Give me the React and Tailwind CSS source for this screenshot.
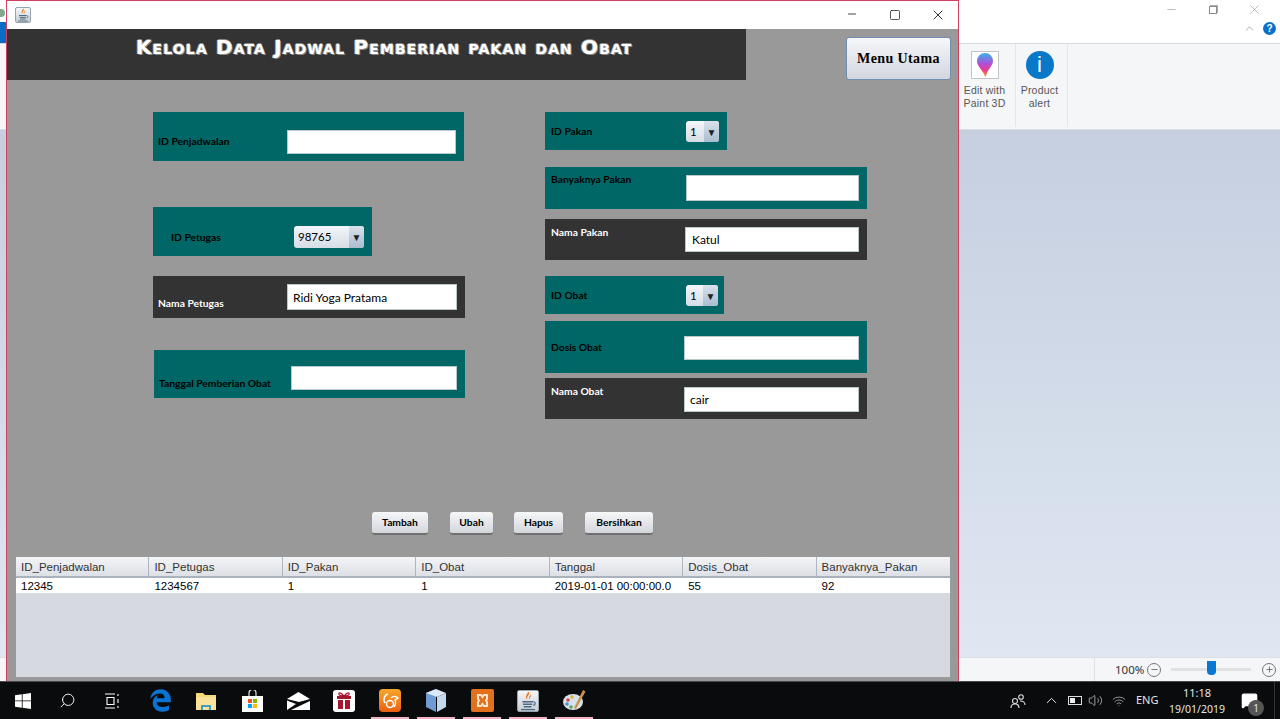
import { Minus, Plus, Search, Square, Volume2, X, ChevronUp, Wifi, MessageSquare } from "lucide-react";
import { FaEdgeLegacy } from "react-icons/fa6";

const labelFont = "font-['Lato',sans-serif] text-[10.3px] font-bold leading-[14px]";

function Field({ className, labelClass, label, children }) {
  return (
    <div className={`flex items-start ${className}`}>
      <span className={`whitespace-nowrap ${labelFont} ${labelClass}`}>{label}</span>
      {children}
    </div>
  );
}

function TextBox({ className, value }) {
  return (
    <div
      className={`flex items-center border border-[#b9c9c9] bg-white pl-[5px] pt-px font-['Lato',sans-serif] text-[12px] text-black ${className}`}
    >
      {value}
    </div>
  );
}

function Combo({ className, value }) {
  return (
    <div
      className={`flex items-center overflow-hidden rounded-[3px] bg-gradient-to-b from-[#f4f6f9] to-[#d5dde6] font-['Lato',sans-serif] text-[11.5px] text-black ${className}`}
    >
      <span className="flex-1 pl-[4px]">{value}</span>
      <span className="flex h-full w-[15px] items-center justify-center bg-gradient-to-b from-[#d9e2ec] to-[#a9bdd1] text-[10px] leading-none text-[#222]">
        ▼
      </span>
    </div>
  );
}

function ActionButton({ className, children }) {
  return (
    <button
      className={`h-[23px] rounded-[3px] border-b-2 border-b-[#6e6e6e] bg-gradient-to-b from-[#f6f7f9] to-[#d3d6dc] font-['Lato',sans-serif] text-[10.3px] font-bold text-black ${className}`}
    >
      {children}
    </button>
  );
}

function JavaIcon({ size = 16 }) {
  return (
    <div
      className="flex items-center justify-center rounded-[2px] border border-[#98a3ad] bg-gradient-to-b from-[#f5f6f7] to-[#c9ced4]"
      style={{ width: size, height: size }}
    >
      <svg width={size - 2} height={size - 2} viewBox="0 0 14 14" fill="none">
        <path d="M7.500 0.500C9 2.500 5.500 3.500 6.500 6 5 4.500 5.500 2.500 7.500 0.500z" fill="#e8761f" />
        <path d="M9 2.500C9.500 4 8 4.500 8 6 7.300 4.800 8 3.500 9 2.500z" fill="#e8761f" />
        <path d="M3 7.500h7.500M3.500 9.300h6.500M4 11h5.500" stroke="#4d6b85" strokeWidth="1" />
        <path d="M10.500 7.500c2 0 2 2.500 0 2.500" stroke="#4d6b85" strokeWidth="0.800" />
        <path d="M2 13h10" stroke="#4d6b85" strokeWidth="0.900" />
      </svg>
    </div>
  );
}

const columns = ["ID_Penjadwalan", "ID_Petugas", "ID_Pakan", "ID_Obat", "Tanggal", "Dosis_Obat", "Banyaknya_Pakan"];
const row = ["12345", "1234567", "1", "1", "2019-01-01 00:00:00.0", "55", "92"];

function JavaWindow() {
  return (
    <div className="absolute left-[6px] top-0 flex h-[681px] w-[953px] flex-col border-x border-t border-[#d3405f] bg-[#999999]">
      <div className="flex h-[28px] shrink-0 items-center bg-white">
        <div className="ml-[8px]">
          <JavaIcon />
        </div>
        <div className="ml-auto flex items-center text-[#111]">
          <div className="-mt-[2px] flex w-[43px] justify-center">
            <Minus size={12} strokeWidth={1.600} />
          </div>
          <div className="flex w-[43px] justify-center">
            <Square size={12} strokeWidth={1.400} />
          </div>
          <div className="mr-[-1px] flex w-[43px] justify-center">
            <X size={16} strokeWidth={1.300} />
          </div>
        </div>
      </div>

      <div className="flex h-[51px] shrink-0 items-start">
        <div className="flex h-[51px] w-[739px] bg-[#333333] pl-[129px] pt-[6px]">
          <h1 className="whitespace-nowrap font-['DejaVu_Sans',sans-serif] text-[20px] font-bold leading-[24px] tracking-[1.12px] text-white [font-variant:small-caps] [text-shadow:1px_1px_0_#8a8a8a,-1px_0_0_#aaa,0_-1px_0_#888]">
            Kelola Data Jadwal Pemberian pakan dan Obat
          </h1>
        </div>
        <button className="ml-[100px] mt-[8px] h-[43px] w-[105px] rounded-[3px] border border-[#6f90b3] bg-gradient-to-b from-[#f6f7fa] to-[#d2d6de] font-['Liberation_Serif',serif] text-[14px] font-bold tracking-[0.4px] text-black">
          Menu Utama
        </button>
      </div>

      <div className="flex h-[339px] shrink-0 pl-[146px] pt-[32px]">
        <div className="w-[392px]">
          <Field className="h-[49px] w-[311px] bg-[#006666] pl-[5px] pt-[22px]" labelClass="w-[129px] text-black" label="ID Penjadwalan">
            <TextBox className="-mt-[4px] h-[24px] w-[169px]" />
          </Field>
          <Field className="mt-[46px] h-[49px] w-[219px] bg-[#006666] pl-[18px] pt-[23px]" labelClass="w-[123px] text-black" label="ID Petugas">
            <Combo className="-mt-[4px] h-[22px] w-[70px]" value="98765" />
          </Field>
          <Field className="mt-[20px] h-[42px] w-[312px] bg-[#333333] pl-[5px] pt-[20px]" labelClass="w-[129px] text-white" label="Nama Petugas">
            <TextBox className="-mt-[12px] h-[26px] w-[170px]" value="Ridi Yoga Pratama" />
          </Field>
          <Field className="ml-[1px] mt-[32px] h-[48px] w-[311px] bg-[#006666] pl-[5px] pt-[26px]" labelClass="w-[132px] text-black" label="Tanggal Pemberian Obat">
            <TextBox className="-mt-[10px] h-[24px] w-[166px]" />
          </Field>
        </div>
        <div>
          <Field className="h-[38px] w-[182px] bg-[#006666] pl-[6px] pt-[12px]" labelClass="w-[135px] text-black" label="ID Pakan">
            <Combo className="-mt-[3px] h-[21px] w-[33px]" value="1" />
          </Field>
          <Field className="mt-[17px] h-[42px] w-[322px] bg-[#006666] pl-[6px] pt-[5px]" labelClass="w-[135px] text-black" label="Banyaknya Pakan">
            <TextBox className="mt-[3px] h-[26px] w-[173px]" />
          </Field>
          <Field className="mt-[10px] h-[41px] w-[322px] bg-[#333333] pl-[6px] pt-[6px]" labelClass="w-[134px] text-white" label="Nama Pakan">
            <TextBox className="mt-[2px] h-[25px] w-[174px] pl-[6px]" value="Katul" />
          </Field>
          <Field className="mt-[16px] h-[38px] w-[179px] bg-[#006666] pl-[6px] pt-[12px]" labelClass="w-[135px] text-black" label="ID Obat">
            <Combo className="-mt-[3px] h-[21px] w-[32px]" value="1" />
          </Field>
          <Field className="mt-[7px] h-[52px] w-[322px] bg-[#006666] pl-[6px] pt-[19px]" labelClass="w-[133px] text-black" label="Dosis Obat">
            <TextBox className="-mt-[4px] h-[24px] w-[175px]" />
          </Field>
          <Field className="mt-[5px] h-[41px] w-[322px] bg-[#333333] pl-[6px] pt-[6px]" labelClass="w-[133px] text-white" label="Nama Obat">
            <TextBox className="mt-[3px] h-[25px] w-[175px]" value="cair" />
          </Field>
        </div>
      </div>

      <div className="mt-[93px] flex shrink-0 pl-[365px]">
        <ActionButton className="w-[56px]">Tambah</ActionButton>
        <ActionButton className="ml-[22px] w-[43px]">Ubah</ActionButton>
        <ActionButton className="ml-[21px] w-[49px]">Hapus</ActionButton>
        <ActionButton className="ml-[22px] w-[68px]">Bersihkan</ActionButton>
      </div>

      <div className="ml-[9px] mt-[22px] h-[120px] w-[934px] shrink-0 bg-[#d6d9e0] font-['Liberation_Sans',sans-serif] text-[11.500px] text-black">
        <div className="grid h-[21px] grid-cols-7 border-b-2 border-[#a9b2bd] bg-gradient-to-b from-[#f3f4f6] to-[#dde0e5]">
          {columns.map((c, i) => (
            <div key={c} className={`pl-[5px] leading-[20px] text-[#333] ${i < 6 ? "border-r border-[#aeb6c0]" : ""}`}>
              {c}
            </div>
          ))}
        </div>
        <div className="grid h-[15px] grid-cols-7 bg-white">
          {row.map((c, i) => (
            <div key={i} className="pl-[5px] leading-[16px]">
              {c}
            </div>
          ))}
        </div>
      </div>
    </div>
  );
}

function RibbonLabel({ lines }) {
  return (
    <div className="mt-[5px] text-center font-['Liberation_Sans',sans-serif] text-[10.500px] tracking-[0.2px] text-[#555]">
      {lines.map((l) => (
        <div key={l} className="h-[12.500px] leading-[12.500px]">
          {l}
        </div>
      ))}
    </div>
  );
}

function BackgroundApp() {
  return (
    <div className="flex h-[681px] flex-col bg-white">
      <div className="flex h-[44px] shrink-0 flex-col border-b border-[#d8dade] text-[#9a9a9a]">
        <div className="ml-[1165px] flex h-[22px] items-center">
          <Minus className="-mt-[4px]" size={13} strokeWidth={1.200} />
          <div className="-mt-[3px] ml-[31px] h-[8px] w-[8px] border border-[#8a8a8a] shadow-[1px_-1px_0_#b0b0b0]" />
          <X className="-mt-[4px] ml-[30px]" size={15} strokeWidth={1.100} />
        </div>
        <div className="ml-[1243px] flex items-center">
          <ChevronUp size={13} strokeWidth={1.500} />
          <div className="ml-[7px] flex h-[13px] w-[13px] items-center justify-center rounded-full bg-[#0a72c6] font-['Liberation_Sans',sans-serif] text-[10px] font-bold leading-none text-white">
            ?
          </div>
        </div>
      </div>
      <div className="flex h-[86px] shrink-0 border-b border-[#d9dce1] bg-[#f5f6f8] pl-[960px]">
        <div className="flex h-[83px] w-[56px] flex-col items-center border-r border-[#e4e6e9] pr-[6px] pt-[7px]">
          <div className="flex h-[28px] w-[28px] items-center justify-center border border-[#c4c4c4] bg-white">
            <svg width="18" height="26" viewBox="0 0 18 26">
              <defs>
                <linearGradient id="pin" x1="0" y1="0" x2="0" y2="1">
                  <stop offset="0" stopColor="#35b4e8" />
                  <stop offset="0.45" stopColor="#b04fd8" />
                  <stop offset="0.75" stopColor="#ee3f86" />
                  <stop offset="1" stopColor="#f9a11b" />
                </linearGradient>
              </defs>
              <path d="M9 1a8 8 0 0 1 8 8c0 5-5 7-7 15-.5 1-1 1-1.300 0C8 19 1 15 1 9a8 8 0 0 1 8-8z" fill="url(#pin)" />
            </svg>
          </div>
          <RibbonLabel lines={["Edit with", "Paint 3D"]} />
        </div>
        <div className="flex h-[83px] w-[52px] flex-col items-center border-r border-[#e4e6e9] pr-[4px] pt-[7px]">
          <div className="flex h-[28px] w-[28px] items-center justify-center rounded-full bg-[#0a78c8] font-['Liberation_Sans',sans-serif] text-[22px] leading-none text-white">
            i
          </div>
          <RibbonLabel lines={["Product", "alert"]} />
        </div>
      </div>
      <div className="flex-1 bg-gradient-to-b from-[#c6cfe0] to-[#dfe7f2]" />
      <div className="flex h-[24px] shrink-0 items-center border-t border-[#dedfe1] bg-[#f5f6f7] font-['Noto_Sans',sans-serif] text-[11.500px] text-[#333]">
        <div className="ml-[1094px] h-full w-[53px] border-l border-[#e0e1e3] pl-[20px] leading-[23px]">100%</div>
        <div className="flex h-[14px] w-[14px] items-center justify-center rounded-full border border-[#777]">
          <Minus size={9} color="#555" />
        </div>
        <div className="relative ml-[10px] h-[3px] w-[80px] bg-[#dfe1e4]">
          <div className="absolute left-[36px] top-[-7px] h-[14px] w-[9px] rounded-b-[4px] bg-[#0a78d2]" />
        </div>
        <div className="ml-[11px] flex h-[14px] w-[14px] items-center justify-center rounded-full border border-[#777]">
          <Plus size={9} color="#555" />
        </div>
      </div>
    </div>
  );
}

function WindowsLogo() {
  return (
    <svg width="16" height="16" viewBox="0 0 16 16" fill="#fff">
      <path d="M0 2.300 6.800 1.300V7.500H0zM7.600 1.200 16 0V7.500H7.600zM0 8.300H6.800V14.700L0 13.700zM7.600 8.300H16V16L7.600 14.800z" />
    </svg>
  );
}

function TaskView() {
  return (
    <svg width="16" height="16" viewBox="0 0 16 16" fill="none" stroke="#fff" strokeWidth="1.100">
      <path d="M0 1h10M2 4.500h7v7H2zM0 15h10M13 1v2M13 6v4M13 13v2" />
    </svg>
  );
}

function Folder() {
  return (
    <svg width="20" height="18" viewBox="0 0 20 18">
      <path d="M0 1h7l2 2h11v15H0z" fill="#f6d874" />
      <path d="M0 5h20v13H0z" fill="#f9e39a" />
      <path d="M5 18v-5h10v5h-2v-3H7v3z" fill="#3f9fc4" />
    </svg>
  );
}

function StoreBag() {
  return (
    <svg width="21" height="22" viewBox="0 0 21 22">
      <path d="M7 6V3a3.500 3.500 0 0 1 7 0v3" fill="none" stroke="#ddd" strokeWidth="1.200" />
      <path d="M0 6h21v16H0z" fill="#fff" />
      <path d="M6 9h4v4H6z" fill="#f25022" />
      <path d="M11 9h4v4h-4z" fill="#7fba00" />
      <path d="M6 14h4v4H6z" fill="#00a4ef" />
      <path d="M11 14h4v4h-4z" fill="#ffb900" />
    </svg>
  );
}

function Mail() {
  return (
    <svg width="23" height="18" viewBox="0 0 23 18">
      <path d="M0 7 11.500 0 23 7 12 10z" fill="#fff" />
      <path d="M0 8.500 9 12l-9 6zM23 9v9H4l19-9z" fill="#fff" />
    </svg>
  );
}

function Gift() {
  return (
    <div className="flex h-[22px] w-[22px] items-center justify-center rounded-[3px] bg-white">
      <svg width="16" height="17" viewBox="0 0 16 17" fill="#a3162e">
        <path d="M1 4h14v3H1zM2 8h5v9H2zM9 8h5v9H9z" />
        <path d="M8 4C5 0 2 0 3 2.500 3.500 4 6 4 8 4c2 0 4.500 0 5-1.500C14 0 11 0 8 4z" fill="none" stroke="#a3162e" strokeWidth="1.200" />
      </svg>
    </div>
  );
}

function UcBrowser() {
  return (
    <div className="flex h-[23px] w-[22px] items-center justify-center rounded-[4px] bg-gradient-to-b from-[#f7a62a] to-[#ea5f12]">
      <svg width="17" height="17" viewBox="0 0 17 17" fill="none" stroke="#fff" strokeWidth="1.400">
        <path d="M6 2C2 3 1 8 3 11" />
        <circle cx="8" cy="12" r="3.500" />
        <path d="M9 6c2-2 5-2 7 0l-3 2c1 2 1 4-1 7" />
      </svg>
    </div>
  );
}

function Cube() {
  return (
    <svg width="20" height="23" viewBox="0 0 20 23">
      <path d="M10 0 0 4v14l10 5z" fill="#6f9bd2" />
      <path d="M10 0 20 4 11 8 0 4z" fill="#dbe8f5" />
      <path d="M11 8v15l9-5V4z" fill="#c6d8ec" />
    </svg>
  );
}

function Xampp() {
  return (
    <div className="flex h-[23px] w-[23px] items-center justify-center rounded-[2px] bg-[#e2711d]">
      <svg width="15" height="15" viewBox="0 0 15 15" fill="none" stroke="#fde6d0" strokeWidth="2">
        <path d="M3 2h3l1.500 2L9 2h3v4l-1 1.500L12 9v4H9l-1.500-2L6 13H3V9l1-1.500L3 6z" />
      </svg>
    </div>
  );
}

function Palette() {
  return (
    <svg width="23" height="23" viewBox="0 0 23 23">
      <ellipse cx="10" cy="13" rx="10" ry="8" fill="#d8e2ea" />
      <path d="M20 1l2.500 1.500L13 20l-2-1z" fill="#c9924f" />
      <circle cx="5" cy="11" r="1.800" fill="#d24a43" />
      <circle cx="9" cy="8" r="1.800" fill="#e0b23c" />
      <circle cx="4" cy="15" r="1.800" fill="#4e8fcb" />
      <circle cx="8" cy="18" r="1.800" fill="#5aa65a" />
    </svg>
  );
}

const taskIcons = [
  { id: "edge", icon: <FaEdgeLegacy size={23} color="#0a74d4" /> },
  { id: "folder", icon: <Folder /> },
  { id: "store", icon: <StoreBag /> },
  { id: "mail", icon: <Mail /> },
  { id: "gift", icon: <Gift /> },
  { id: "uc", icon: <UcBrowser />, open: true },
  { id: "cube", icon: <Cube />, open: true },
  { id: "xampp", icon: <Xampp />, open: true },
  { id: "java", icon: <JavaIcon size={22} />, open: true },
  { id: "paint", icon: <Palette />, open: true },
];

function Taskbar() {
  return (
    <div className="flex h-[38px] items-center border-t border-[#4a4a4a] bg-[#0a0b0d] text-white">
      <div className="flex h-full w-[45px] items-center justify-center">
        <WindowsLogo />
      </div>
      <div className="flex h-full w-[45px] items-center justify-center">
        <Search className="-scale-x-100" size={17} strokeWidth={1.300} />
      </div>
      <div className="flex h-full w-[45px] items-center justify-center">
        <TaskView />
      </div>
      <div className="ml-[2px] flex h-full">
        {taskIcons.map((t) => (
          <div key={t.id} className="relative flex h-full w-[46px] items-center justify-center">
            {t.icon}
            {t.open && <div className="absolute bottom-0 left-[4px] h-[2px] w-[38px] bg-[#f2b5c8]" />}
          </div>
        ))}
      </div>
      <div className="ml-auto flex h-full items-center font-['Noto_Sans',sans-serif] text-[11px] text-[#e6e6e6]">
        <svg width="16" height="16" viewBox="0 0 16 16" fill="none" stroke="#ddd" strokeWidth="1.100">
          <circle cx="5" cy="8" r="2.500" />
          <path d="M1 15c0-3 2-4 4-4s4 1 4 4" />
          <circle cx="11" cy="4" r="2.300" />
          <path d="M10 8c3 0 5 1 5 4" />
        </svg>
        <ChevronUp className="ml-[17px]" size={17} strokeWidth={1.400} />
        <div className="ml-[8px] flex h-[9px] w-[14px] items-center border border-[#ddd] p-px">
          <div className="h-full w-[5px] bg-[#eee]" />
        </div>
        <Volume2 className="ml-[6px]" size={15} strokeWidth={1.200} color="#ccc" />
        <Wifi className="ml-[9px]" size={14} strokeWidth={1.400} color="#aaa" />
        <span className="ml-[10px] w-[22px]">ENG</span>
        <div className="ml-[11px] w-[56px] text-center text-[10.500px] leading-[17px]">
          <div className="text-[11px]">11:18</div>
          <div>19/01/2019</div>
        </div>
        <div className="relative ml-[16px] mr-[5px] flex h-full w-[34px] items-center">
          <MessageSquare size={17} fill="#fff" color="#fff" />
          <div className="absolute left-[7px] top-[18px] flex h-[16px] w-[16px] items-center justify-center rounded-full bg-[#555] text-[10px] leading-none">
            1
          </div>
          <div className="absolute right-0 top-0 h-full border-l border-[#333]" />
        </div>
      </div>
    </div>
  );
}

export default function App() {
  return (
    <div className="relative h-[719px] w-[1280px] overflow-hidden bg-white">
      <BackgroundApp />
      <div className="absolute left-0 top-[22px] h-[21px] w-[6px] bg-[#0a6cc4]" />
      <div className="absolute left-0 top-[9px] h-[8px] w-[5px] rounded-r-full bg-[#7fa88f]" />
      <JavaWindow />
      <Taskbar />
    </div>
  );
}
